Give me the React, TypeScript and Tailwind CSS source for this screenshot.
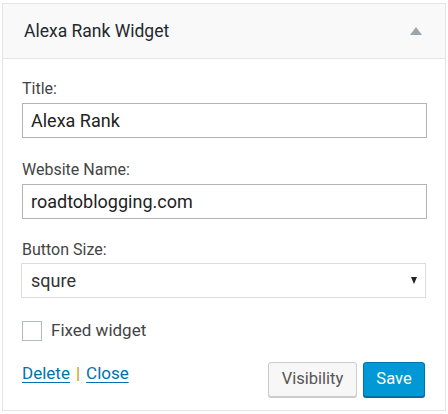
export default function App() {
  return (
    <div className="w-[448px] h-[414px] bg-white pt-[3px] pl-[2px] font-['Roboto',sans-serif]">
      <div className="w-[444px] h-[408px] border border-[#e5e5e5] bg-white flex flex-col">
        <div className="h-[55px] bg-[#f9f9f9] border-b border-[#e5e5e5] flex items-center justify-between pl-[21px] pr-[23px]">
          <span className="text-[17.5px] font-normal text-[#23282d]">Alexa Rank Widget</span>
          <span className="w-0 h-0 border-l-[6px] border-r-[6px] border-b-[8px] border-l-transparent border-r-transparent border-b-[#a0a5aa] mb-[1px]" />
        </div>
        <div className="flex flex-col pl-[19px] pr-[18px] pt-[19px]">
          <label className="text-[16px] text-[#444] leading-[22px]">Title:</label>
          <div className="mt-[3px] h-[35px] border border-[#b4b4b4] flex items-center px-[8px] text-[18px] text-[#222]">Alexa Rank</div>
          <label className="mt-[21px] text-[16px] text-[#444] leading-[22px]">Website Name:</label>
          <div className="mt-[3px] h-[35px] border border-[#b4b4b4] flex items-center px-[8px] text-[18px] text-[#222]">roadtoblogging.com</div>
          <label className="mt-[20px] text-[16px] text-[#444] leading-[22px]">Button Size:</label>
          <div className="mt-[2px] -ml-[1px] mr-[1px] h-[35px] border border-[#dddddd] flex items-center justify-between pl-[9px] pr-[8px] text-[18px] text-[#333]">
            <span>squre</span>
            <span className="w-0 h-0 border-l-[3.5px] border-r-[3.5px] border-t-[7px] border-l-transparent border-r-transparent border-t-[#222]" />
          </div>
          <div className="mt-[20px] flex items-center gap-[9px]">
            <span className="w-[20px] h-[20px] border border-[#b4b9be] bg-white" />
            <span className="text-[17px] text-[#444]">Fixed widget</span>
          </div>
          <div className="mt-[18px] flex items-start justify-between pr-[2px]">
            <div className="text-[17px] -mt-[1px]">
              <a className="text-[#0073aa] underline underline-offset-[3px]">Delete</a>
              <span className="text-[#c89a00] mx-[6px]">|</span>
              <a className="text-[#0073aa] underline underline-offset-[3px]">Close</a>
            </div>
            <div className="flex gap-[6px]">
              <button className="h-[35px] w-[89px] border border-[#cccccc] bg-[#f7f7f7] rounded-[3px] text-[16.5px] text-[#555] shadow-[0_1px_0_#cccccc]">Visibility</button>
              <button className="h-[35px] w-[62px] border border-[#0073aa] bg-[#0099d5] rounded-[3px] text-[16.5px] text-white shadow-[0_1px_0_#006799]">Save</button>
            </div>
          </div>
        </div>
      </div>
    </div>
  )
}
